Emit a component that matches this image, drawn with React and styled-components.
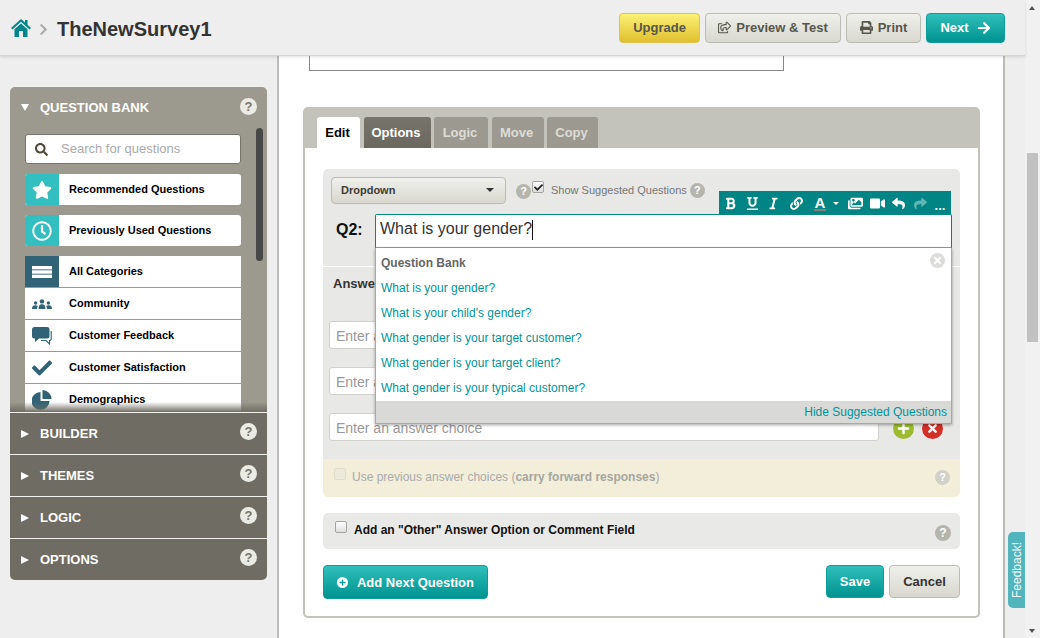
import React from 'react'
import styled, { createGlobalStyle, css } from 'styled-components'
import {
  FaRegShareSquare, FaPrint, FaArrowRight, FaChevronRight, FaSearch, FaStar, FaRegClock,
  FaCheck, FaBold, FaUnderline, FaItalic, FaLink, FaImages, FaVideo, FaReply, FaShare, FaPlus, FaTimes,
} from 'react-icons/fa'

const GlobalStyle = createGlobalStyle`
  html, body { margin: 0; height: 100%; overflow: hidden; }
  body { font-family: "Liberation Sans", Arial, sans-serif; background: #eee; }
  * { box-sizing: border-box; }
`

const Shell = styled.div`
  display: flex;
  width: 1040px;
  height: 638px;
  overflow: hidden;
  position: relative;
`

const Page = styled.div`
  width: 1025px;
  display: flex;
  flex-direction: column;
`

const Header = styled.header`
  height: 56px;
  flex: none;
  display: flex;
  align-items: center;
  padding: 0 20px 0 11px;
  background: #eee;
  border-bottom: 1px solid #d4d4d4;
  box-shadow: 0 1px 3px rgba(0, 0, 0, 0.12);
  position: relative;
  z-index: 3;
`

const HomeIcon = styled.svg`
  width: 20px;
  height: 20px;
  flex: none;
  fill: #00858a;
`

const Crumb = styled(FaChevronRight)`
  width: 9px;
  height: 13px;
  color: #aaa;
  margin: 4px 9px 0 8px;
`

const Title = styled.h1`
  margin: 3px 0 0;
  font-size: 20px;
  font-weight: 700;
  color: #333;
  flex: 1;
`

const Actions = styled.div`
  display: flex;
  gap: 5px;
`

const gradients = {
  yellow: css`
    background: linear-gradient(#fbf274, #e0bf30);
    border-color: #e0c44c;
    color: #57564c;
  `,
  gray: css`
    background: linear-gradient(#f0f0ec, #d8d8d0);
    border-color: #bcbcb6;
    color: #57564c;
  `,
  teal: css`
    background: linear-gradient(#30bfbb, #00938f);
    border-color: #0d9c98;
    color: #fff;
  `,
}

const Button = styled.button`
  ${({ $tone }) => gradients[$tone]}
  ${({ $ink }) => $ink && css`color: ${$ink};`}
  width: ${({ $w }) => $w}px;
  height: ${({ $h }) => $h || 30}px;
  border-width: 1px;
  border-style: solid;
  border-radius: 4px;
  font: 700 13px "Liberation Sans", Arial, sans-serif;
  display: inline-flex;
  align-items: center;
  justify-content: center;
  gap: ${({ $gap }) => $gap || 5}px;
  padding: 0;
  svg { width: ${({ $icon }) => $icon || 13}px; height: ${({ $icon }) => $icon || 13}px; }
`

const Body = styled.div`
  flex: 1;
  display: flex;
  min-height: 0;
`

const Sidebar = styled.aside`
  width: 277px;
  flex: none;
  padding: 31px 10px 0;
`

const Accordion = styled.div`
  width: 257px;
  border-radius: 5px;
  overflow: hidden;
`

const Pane = styled.div`
  height: 325px;
  background: #9c9a8e;
  position: relative;
  overflow: hidden;
  padding: 0 26px 0 15px;
`

const PaneTitle = styled.div`
  height: 47px;
  margin: 0 -26px 0 -15px;
  padding: 0 10px 7px 11px;
  display: flex;
  align-items: center;
  color: #fff;
  font-size: 13px;
  font-weight: 700;
`

const Arrow = styled.span`
  width: 0;
  height: 0;
  flex: none;
  margin-right: 11px;
  ${({ $open }) =>
    $open
      ? css`
          border-left: 4px solid transparent;
          border-right: 4px solid transparent;
          border-top: 7px solid #fff;
        `
      : css`
          border-top: 4px solid transparent;
          border-bottom: 4px solid transparent;
          border-left: 8px solid #fff;
        `}
`

const SectionName = styled.span`
  flex: 1;
`

const Help = styled.span`
  width: ${({ $size }) => $size || 15}px;
  height: ${({ $size }) => $size || 15}px;
  flex: none;
  border-radius: 50%;
  background: ${({ $bg }) => $bg || '#b5b5ae'};
  color: ${({ $fg }) => $fg || '#fff'};
  font: 700 ${({ $size }) => ($size ? $size - 4 : 11)}px/1 "Liberation Sans", Arial, sans-serif;
  display: inline-flex;
  align-items: center;
  justify-content: center;
`

const SideHelp = styled(Help).attrs({ $size: 17, $bg: '#ebebe6', $fg: '#77756a' })`
  margin-top: -4px;
`

const PaneHelp = styled(SideHelp)`
  margin-top: -1px;
`

const SearchBox = styled.label`
  height: 30px;
  width: 216px;
  display: flex;
  align-items: center;
  background: #fff;
  border: 1px solid #77756a;
  border-radius: 3px;
  padding-left: 9px;
  svg { width: 13px; height: 13px; color: #4f4838; flex: none; }
`

const SearchInput = styled.input`
  border: 0;
  outline: 0;
  flex: 1;
  min-width: 0;
  margin: -1px 0 0 11px;
  background: none;
  font: 13px "Liberation Sans", Arial, sans-serif;
  &::placeholder { color: #aaa; opacity: 1; }
`

const LinkRow = styled.div`
  width: 216px;
  height: ${({ $list }) => ($list ? 32 : 31)}px;
  margin-top: ${({ $gap }) => $gap || 0}px;
  display: flex;
  align-items: flex-start;
  background: #fff;
  border-radius: ${({ $list }) => ($list ? '0' : '3px')};
  overflow: hidden;
  border-bottom: ${({ $list }) => ($list ? '1px solid #9c9a8e' : '0')};
  font-size: 11px;
  font-weight: 700;
  color: #000;
`

const RowIcon = styled.span`
  width: 34px;
  height: 31px;
  flex: none;
  margin-right: 10px;
  display: flex;
  align-items: center;
  justify-content: center;
  background: ${({ $bg }) => $bg || 'transparent'};
  color: ${({ $color }) => $color || '#fff'};
  svg { width: 20px; height: 20px; }
`

const RowLabel = styled.span`
  line-height: 30px;
`

const PaneScroll = styled.span`
  position: absolute;
  left: 246px;
  top: 41px;
  width: 7px;
  height: 133px;
  background: #474747;
  border-radius: 4px;
`

const PaneFade = styled.span`
  position: absolute;
  left: 0;
  right: 0;
  bottom: 0;
  height: 10px;
  background: linear-gradient(rgba(111, 109, 99, 0), #6f6d63);
`

const SectionHead = styled.div`
  height: 42px;
  border-top: 1px solid #f2f2ee;
  background: #6f6d63;
  color: #fff;
  font-size: 13px;
  font-weight: 700;
  padding: 0 10px 0 11px;
  display: flex;
  align-items: center;
`

const Main = styled.main`
  width: 728px;
  flex: none;
  background: #fff;
  border-left: 2px solid #bcbcb8;
  border-right: 2px solid #bcbcb8;
`

const TopBox = styled.div`
  width: 475px;
  height: 15px;
  margin-left: 30px;
  background: #fff;
  border: 1px solid #888;
  border-top: 0;
`

const Card = styled.section`
  width: 677px;
  margin: 36px 0 0 24px;
`

const TabBar = styled.div`
  height: 41px;
  background: #c3c3bb;
  border-radius: 5px 5px 0 0;
  padding: 10px 0 0 14px;
  display: flex;
  gap: 3.5px;
`

const tabTones = {
  active: css`background: #fff; color: #000;`,
  dark: css`background: linear-gradient(#77756b, #6a685e); color: #fff;`,
  muted: css`background: #9c9a90; color: #dcdcd6;`,
}

const Tab = styled.div`
  ${({ $tone }) => tabTones[$tone]}
  width: ${({ $w }) => $w}px;
  padding-right: 2px;
  border-radius: 3px 3px 0 0;
  font-size: 13px;
  font-weight: 700;
  text-align: center;
  line-height: 31px;
`

const CardBody = styled.div`
  height: 470px;
  border: 2px solid #c3c3bb;
  border-top: 0;
  border-radius: 0 0 5px 5px;
  padding: 21px 18px 0;
  background: #fff;
`

const EditorPanel = styled.div`
  height: 290px;
  background: #e8e8e6;
  border-radius: 5px 5px 0 0;
  position: relative;
`

const TypeRow = styled.div`
  height: 45px;
  padding: 8px 0 0 8px;
  display: flex;
  align-items: flex-start;
`

const TypeSelect = styled.div`
  width: 175px;
  height: 27px;
  background: linear-gradient(#f0f0ec, #d8d8d0);
  border: 1px solid #bcbcb6;
  border-radius: 4px;
  padding: 0 11px 2px 9px;
  display: flex;
  align-items: center;
  justify-content: space-between;
  font-size: 11px;
  font-weight: 700;
  color: #3d3c34;
`

const Caret = styled.span`
  width: 0;
  height: 0;
  border-left: ${({ $s }) => $s || 4}px solid transparent;
  border-right: ${({ $s }) => $s || 4}px solid transparent;
  border-top: ${({ $s }) => $s || 4}px solid ${({ $color }) => $color || '#333'};
`

const SuggestHelp = styled(Help)`
  margin: 7px 1px 0 10px;
`

const CheckBox = styled.span`
  width: 12px;
  height: 12px;
  flex: none;
  border: 1px solid ${({ $faint }) => ($faint ? '#dedbc9' : '#a4a4a0')};
  border-radius: 2px;
  background: ${({ $faint }) => ($faint ? '#eeeadb' : 'linear-gradient(#fff, #dedede)')};
  display: inline-flex;
  align-items: center;
  justify-content: center;
  svg { width: 9px; height: 9px; color: #222; }
`

const SuggestCheck = styled(CheckBox)`
  margin: 4px 0 0 0;
`

const SuggestLabel = styled.span`
  font-size: 11px;
  color: #777;
  margin: 7px 3px 0 7px;
`

const SuggestTailHelp = styled(Help)`
  margin-top: 6px;
`

const Toolbar = styled.div`
  position: absolute;
  left: 396px;
  top: 22px;
  width: 232px;
  height: 23px;
  background: #008484;
  color: #fff;
  padding-top: 2px;
  display: grid;
  grid-template-columns: 23px 21px 21px 25px 22px 9px 30px 14px 28px 17px 22px;
  align-items: center;
  justify-items: center;
  z-index: 2;
  svg { width: 13px; height: 13px; }
`

const ToolLetter = styled.span`
  font-size: 15px;
  font-weight: 700;
  line-height: 13px;
  padding: 0 1px;
  border-bottom: 2px solid #8c7a78;
`

const WideIcon = styled.span`
  display: inline-flex;
  svg { width: 15px; height: 15px; }
`

const Redo = styled(FaShare)`
  color: #5fb4b4;
`

const ToolMore = styled.span`
  font-size: 13px;
  font-weight: 700;
  line-height: 13px;
  margin-top: 3px;
`

const QuestionRow = styled.div`
  height: 34px;
  display: flex;
  align-items: center;
`

const QLabel = styled.label`
  width: 52px;
  padding: 0 0 2px 13px;
  font-size: 16px;
  font-weight: 700;
  color: #111;
`

const QuestionInput = styled.div`
  width: 577px;
  height: 34px;
  background: #fff;
  border: 1px solid #9a9a96;
  border-top-color: #008484;
  border-left-color: #008484;
  border-right-color: #008484;
  border-radius: 2px 2px 0 0;
  padding: 4px 4px;
  font-size: 16px;
  line-height: 20px;
  color: #333;
  display: flex;
  align-items: flex-start;
`

const TextCaret = styled.span`
  width: 1px;
  height: 20px;
  background: #111;
  margin-top: 1px;
`

const Answers = styled.div`
  margin-top: 18px;
  border-top: 1px solid #fff;
  padding: 0 0 0 6px;
`

const AnswerTitle = styled.div`
  padding: 9px 0 0 4px;
  height: 54px;
  font-size: 13px;
  font-weight: 700;
  color: #333;
`

const ChoiceList = styled.div`
  display: flex;
  flex-direction: column;
  gap: 18px;
`

const Choice = styled.div`
  display: flex;
  align-items: center;
`

const ChoiceInput = styled.input`
  width: 550px;
  height: 28px;
  border: 1px solid #d0d0cc;
  border-radius: 3px;
  background: #fff;
  padding: 2px 6px 0;
  font: 14px "Liberation Sans", Arial, sans-serif;
  outline: 0;
  &::placeholder { color: #999; opacity: 1; }
`

const RoundAction = styled.span`
  width: 21px;
  height: 21px;
  margin: 2px 0 0 ${({ $ml }) => $ml}px;
  border-radius: 50%;
  background: ${({ $bg }) => $bg};
  color: #fff;
  display: flex;
  align-items: center;
  justify-content: center;
  svg { width: 13px; height: 13px; }
`

const SuggestPanel = styled.div`
  position: absolute;
  left: 52px;
  top: 79px;
  width: 577px;
  height: 176px;
  background: #fff;
  border: 1px solid #a8a8a4;
  border-top: 0;
  box-shadow: 0 1px 3px rgba(0, 0, 0, 0.35);
  display: flex;
  flex-direction: column;
  z-index: 1;
`

const SuggestList = styled.div`
  flex: 1;
  padding: 8px 5px 0;
`

const BankLabel = styled.div`
  font-size: 12px;
  font-weight: 700;
  color: #666;
  line-height: 14px;
  margin-bottom: 6px;
`

const SuggestItem = styled.a`
  display: block;
  font-size: 12px;
  line-height: 25px;
  color: #00959b;
`

const SuggestClose = styled.span`
  position: absolute;
  right: 6px;
  top: 5px;
  width: 15px;
  height: 15px;
  border-radius: 50%;
  background: #dcdcda;
  color: #fff;
  display: flex;
  align-items: center;
  justify-content: center;
  svg { width: 11px; height: 11px; }
`

const SuggestFooter = styled.div`
  height: 23px;
  background: #d9d9d7;
  padding-right: 4px;
  text-align: right;
  font-size: 12px;
  line-height: 22px;
  color: #00959b;
`

const CarryRow = styled.div`
  height: 38px;
  background: #f2eeda;
  border-radius: 0 0 5px 5px;
  padding: 0 10px 2px 11px;
  display: flex;
  align-items: center;
  font-size: 12px;
  color: #aaa;
  b { color: #a6a6a0; }
`

const CarryText = styled.span`
  flex: 1;
  margin-left: 6px;
`

const CarryCheck = styled(CheckBox)`
  margin-top: -7px;
`

const OtherRow = styled.div`
  height: 36px;
  margin-top: 16px;
  background: #e9e9e7;
  border-radius: 5px;
  padding: 0 9px 2px 12px;
  display: flex;
  align-items: center;
  font-size: 12px;
  font-weight: 700;
  color: #111;
`

const OtherCheck = styled(CheckBox)`
  margin-top: -7px;
`

const OtherText = styled.span`
  flex: 1;
  margin-left: 7px;
`

const OtherHelp = styled(Help).attrs({ $size: 16 })`
  margin-top: 6px;
`

const CardFooter = styled.div`
  margin-top: 16px;
  display: flex;
  align-items: flex-start;
  justify-content: space-between;
`

const FooterRight = styled.div`
  display: flex;
  gap: 5px;
`

const AddIcon = styled.span`
  width: 11px;
  height: 11px;
  border-radius: 50%;
  background: #fff;
  color: #0b9e9b;
  margin-right: 3px;
  display: inline-flex;
  align-items: center;
  justify-content: center;
  svg { width: 7px; height: 7px; }
`

const Gutter = styled.div`
  flex: 1;
  background: #eee;
`

const Scrollbar = styled.div`
  width: 15px;
  flex: none;
  background: #f1f1f1;
  position: relative;
`

const ScrollThumb = styled.div`
  position: absolute;
  left: 2px;
  top: 153px;
  width: 11px;
  height: 189px;
  background: #c1c1c1;
`

const ScrollArrow = styled.span`
  position: absolute;
  left: 4px;
  width: 0;
  height: 0;
  border-left: 3.5px solid transparent;
  border-right: 3.5px solid transparent;
  ${({ $up }) =>
    $up
      ? css`top: 6px; border-bottom: 4px solid #505050;`
      : css`bottom: 5px; border-top: 4px solid #505050;`}
`

const FeedbackTab = styled.div`
  position: absolute;
  left: 1008px;
  top: 532px;
  width: 17px;
  height: 76px;
  background: #52b4bc;
  color: #f2fbfb;
  font-size: 12px;
  writing-mode: vertical-rl;
  transform: rotate(180deg);
  border-radius: 0 5px 5px 0;
  display: flex;
  align-items: center;
  justify-content: center;
  z-index: 4;
`

const BarsIcon = () => (
  <svg viewBox="0 0 20 20" fill="currentColor">
    <rect x="0" y="4" width="20" height="3.4" />
    <rect x="0" y="8.3" width="20" height="3.4" />
    <rect x="0" y="12.6" width="20" height="3.4" />
  </svg>
)

const CommunityIcon = () => (
  <svg viewBox="0 0 20 20" fill="currentColor">
    <circle cx="10" cy="7.4" r="2.2" />
    <path d="M6.6 15c0-3.6 1.3-4.8 3.4-4.8s3.4 1.2 3.4 4.8z" />
    <circle cx="3.6" cy="9" r="1.7" />
    <path d="M0 15c0-2.8 1.2-3.8 3.4-3.8 1 0 1.8.2 2.3.7-.4.8-.6 1.8-.6 3.1z" />
    <circle cx="16.4" cy="9" r="1.7" />
    <path d="M20 15c0-2.8-1.2-3.8-3.4-3.8-1 0-1.8.2-2.3.7.4.8.6 1.8.6 3.1z" />
  </svg>
)

const BubblesIcon = () => (
  <svg viewBox="0 0 20 20" fill="currentColor">
    <path d="M2.5 1H15a2.5 2.5 0 0 1 2.5 2.5V10a2.5 2.5 0 0 1-2.5 2.5H7L3 16v-3.5h-.5A2.5 2.5 0 0 1 0 10V3.5A2.5 2.5 0 0 1 2.5 1z" />
    <path d="M19.2 5v8a1.5 1.5 0 0 1-1.5 1.5H17.5V18L14 14.5H9" fill="none" stroke="currentColor" strokeWidth="1.1" />
  </svg>
)

const PieIcon = () => (
  <svg viewBox="0 0 20 20" fill="currentColor">
    <path d="M8.5 2a9 9 0 1 0 9 9h-9z" />
    <path d="M10.5 0a9 9 0 0 1 9 9h-9z" />
  </svg>
)

const rowsTop = [
  { label: 'Recommended Questions', icon: <FaStar /> },
  { label: 'Previously Used Questions', icon: <FaRegClock /> },
]

const categories = [
  { label: 'Community', icon: <CommunityIcon /> },
  { label: 'Customer Feedback', icon: <BubblesIcon /> },
  { label: 'Customer Satisfaction', icon: <FaCheck /> },
  { label: 'Demographics', icon: <PieIcon /> },
]

const suggestions = [
  'What is your gender?',
  "What is your child's gender?",
  'What gender is your target customer?',
  'What gender is your target client?',
  'What gender is your typical customer?',
]

const sections = ['BUILDER', 'THEMES', 'LOGIC', 'OPTIONS']

export default function App() {
  return (
    <Shell>
      <GlobalStyle />
      <Page>
        <Header>
          <HomeIcon viewBox="0 0 20 20">
            <path d="M10 1l4 3.6V2h2.5v4.8L20 10l-1.4 1.4L10 3.8l-8.6 7.6L0 10z" />
            <path d="M3.5 11.2L10 5.5l6.5 5.7V19H12v-6H8v6H3.5z" />
          </HomeIcon>
          <Crumb />
          <Title>TheNewSurvey1</Title>
          <Actions>
            <Button $tone="yellow" $w={81}>Upgrade</Button>
            <Button $tone="gray" $w={136}><FaRegShareSquare />Preview &amp; Test</Button>
            <Button $tone="gray" $w={75}><FaPrint />Print</Button>
            <Button $tone="teal" $w={79} $gap={8} $icon={14}>Next <FaArrowRight /></Button>
          </Actions>
        </Header>
        <Body>
          <Sidebar>
            <Accordion>
              <Pane>
                <PaneTitle>
                  <Arrow $open />
                  <SectionName>QUESTION BANK</SectionName>
                  <PaneHelp>?</PaneHelp>
                </PaneTitle>
                <SearchBox>
                  <FaSearch />
                  <SearchInput placeholder="Search for questions" />
                </SearchBox>
                {rowsTop.map((row) => (
                  <LinkRow key={row.label} $gap={10}>
                    <RowIcon $bg="#33bfc0">{row.icon}</RowIcon>
                    <RowLabel>{row.label}</RowLabel>
                  </LinkRow>
                ))}
                <LinkRow $list $gap={10}>
                  <RowIcon $bg="#2f6375"><BarsIcon /></RowIcon>
                  <RowLabel>All Categories</RowLabel>
                </LinkRow>
                {categories.map((row) => (
                  <LinkRow key={row.label} $list>
                    <RowIcon $color="#2f6375">{row.icon}</RowIcon>
                    <RowLabel>{row.label}</RowLabel>
                  </LinkRow>
                ))}
                <PaneScroll />
                <PaneFade />
              </Pane>
              {sections.map((name) => (
                <SectionHead key={name}>
                  <Arrow />
                  <SectionName>{name}</SectionName>
                  <SideHelp>?</SideHelp>
                </SectionHead>
              ))}
            </Accordion>
          </Sidebar>
          <Main>
            <TopBox />
            <Card>
              <TabBar>
                <Tab $tone="active" $w={43}>Edit</Tab>
                <Tab $tone="dark" $w={67}>Options</Tab>
                <Tab $tone="muted" $w={54}>Logic</Tab>
                <Tab $tone="muted" $w={52}>Move</Tab>
                <Tab $tone="muted" $w={51}>Copy</Tab>
              </TabBar>
              <CardBody>
                <EditorPanel>
                  <TypeRow>
                    <TypeSelect>Dropdown<Caret /></TypeSelect>
                    <SuggestHelp>?</SuggestHelp>
                    <SuggestCheck><FaCheck /></SuggestCheck>
                    <SuggestLabel>Show Suggested Questions</SuggestLabel>
                    <SuggestTailHelp>?</SuggestTailHelp>
                  </TypeRow>
                  <Toolbar>
                    <FaBold />
                    <FaUnderline />
                    <FaItalic />
                    <FaLink />
                    <ToolLetter>A</ToolLetter>
                    <Caret $s={3} $color="#fff" />
                    <WideIcon><FaImages /></WideIcon>
                    <WideIcon><FaVideo /></WideIcon>
                    <FaReply />
                    <Redo />
                    <ToolMore>...</ToolMore>
                  </Toolbar>
                  <QuestionRow>
                    <QLabel>Q2:</QLabel>
                    <QuestionInput>What is your gender?<TextCaret /></QuestionInput>
                  </QuestionRow>
                  <Answers>
                    <AnswerTitle>Answer Choices</AnswerTitle>
                    <ChoiceList>
                      {[0, 1, 2].map((n) => (
                        <Choice key={n}>
                          <ChoiceInput placeholder="Enter an answer choice" />
                          <RoundAction $ml={14} $bg="#9dbb2e"><FaPlus /></RoundAction>
                          <RoundAction $ml={8} $bg="#d42f27"><FaTimes /></RoundAction>
                        </Choice>
                      ))}
                    </ChoiceList>
                  </Answers>
                  <SuggestPanel>
                    <SuggestList>
                      <BankLabel>Question Bank</BankLabel>
                      {suggestions.map((text) => (
                        <SuggestItem key={text}>{text}</SuggestItem>
                      ))}
                    </SuggestList>
                    <SuggestClose><FaTimes /></SuggestClose>
                    <SuggestFooter>Hide Suggested Questions</SuggestFooter>
                  </SuggestPanel>
                </EditorPanel>
                <CarryRow>
                  <CarryCheck $faint />
                  <CarryText>Use previous answer choices (<b>carry forward responses</b>)</CarryText>
                  <Help $bg="#d2d1c8">?</Help>
                </CarryRow>
                <OtherRow>
                  <OtherCheck />
                  <OtherText>Add an "Other" Answer Option or Comment Field</OtherText>
                  <OtherHelp>?</OtherHelp>
                </OtherRow>
                <CardFooter>
                  <Button $tone="teal" $w={165} $h={34} $gap={6}>
                    <AddIcon><FaPlus /></AddIcon>Add Next Question
                  </Button>
                  <FooterRight>
                    <Button $tone="teal" $w={58} $h={33}>Save</Button>
                    <Button $tone="gray" $ink="#333" $w={71} $h={33}>Cancel</Button>
                  </FooterRight>
                </CardFooter>
              </CardBody>
            </Card>
          </Main>
          <Gutter />
        </Body>
      </Page>
      <Scrollbar>
        <ScrollArrow $up />
        <ScrollThumb />
        <ScrollArrow />
      </Scrollbar>
      <FeedbackTab>Feedback!</FeedbackTab>
    </Shell>
  )
}
